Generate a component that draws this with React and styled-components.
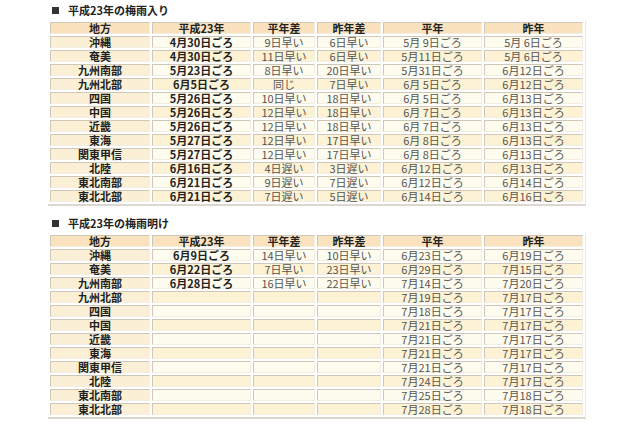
import React from 'react';
import styled, { createGlobalStyle } from 'styled-components';

const GlobalStyle = createGlobalStyle`
  html, body {
    margin: 0;
    padding: 0;
    background: #ffffff;
  }
  body {
    font-family: "Noto Sans CJK JP", "Noto Sans", sans-serif;
    color: #333;
  }
`;

const Page = styled.div`
  width: 640px;
  height: 426px;
  padding: 3px 0 0 48px;
  box-sizing: border-box;
  overflow: hidden;
`;

const Section = styled.section`
  margin-bottom: ${({ gap }) => gap || 0}px;
`;

const Title = styled.h2`
  display: flex;
  align-items: center;
  gap: 9px;
  margin: 0 0 2px 4px;
  height: 15px;
  font-size: 11px;
  font-weight: bold;
  color: #222;
  line-height: 15px;

  &::before {
    content: '';
    width: 7px;
    height: 7px;
    background: #333;
  }
`;

const Table = styled.table`
  table-layout: fixed;
  width: 537px;
  border-collapse: separate;
  border-spacing: 2px;
  border-bottom: 2px solid #dcd8d0;
  border-right: 1px solid #ece8e0;
  font-size: 11px;
`;

const Cell = styled.td`
  height: 12px;
  padding: 0;
  line-height: 10px;
  text-align: center;
  white-space: pre;
  box-sizing: border-box;
  border: 1px solid;
  border-color: #cfc8b8 #f3eee2 #f3eee2 #cfc8b8;
  font-weight: ${({ $bold }) => ($bold ? 'bold' : 'normal')};
  color: ${({ $bold }) => ($bold ? '#222' : '#555')};
  background: ${({ $tone }) =>
    $tone === 'head' ? '#fbe2bf' : $tone === 'area' ? '#fbf0d6' : $tone === 'even' ? '#fdf3d4' : '#fefbef'};
`;

const widths = [100, 99, 62, 64, 99, 99];
const heads = ['地方', '平成23年', '平年差', '昨年差', '平年', '昨年'];

const tsuyuIri = [
  ['沖縄', '4月30日ごろ', '9日早い', '6日早い', '5月 9日ごろ', '5月 6日ごろ'],
  ['奄美', '4月30日ごろ', '11日早い', '6日早い', '5月11日ごろ', '5月 6日ごろ'],
  ['九州南部', '5月23日ごろ', '8日早い', '20日早い', '5月31日ごろ', '6月12日ごろ'],
  ['九州北部', '6月5日ごろ', '同じ', '7日早い', '6月 5日ごろ', '6月12日ごろ'],
  ['四国', '5月26日ごろ', '10日早い', '18日早い', '6月 5日ごろ', '6月13日ごろ'],
  ['中国', '5月26日ごろ', '12日早い', '18日早い', '6月 7日ごろ', '6月13日ごろ'],
  ['近畿', '5月26日ごろ', '12日早い', '18日早い', '6月 7日ごろ', '6月13日ごろ'],
  ['東海', '5月27日ごろ', '12日早い', '17日早い', '6月 8日ごろ', '6月13日ごろ'],
  ['関東甲信', '5月27日ごろ', '12日早い', '17日早い', '6月 8日ごろ', '6月13日ごろ'],
  ['北陸', '6月16日ごろ', '4日遅い', '3日遅い', '6月12日ごろ', '6月13日ごろ'],
  ['東北南部', '6月21日ごろ', '9日遅い', '7日遅い', '6月12日ごろ', '6月14日ごろ'],
  ['東北北部', '6月21日ごろ', '7日遅い', '5日遅い', '6月14日ごろ', '6月16日ごろ'],
];

const tsuyuAke = [
  ['沖縄', '6月9日ごろ', '14日早い', '10日早い', '6月23日ごろ', '6月19日ごろ'],
  ['奄美', '6月22日ごろ', '7日早い', '23日早い', '6月29日ごろ', '7月15日ごろ'],
  ['九州南部', '6月28日ごろ', '16日早い', '22日早い', '7月14日ごろ', '7月20日ごろ'],
  ['九州北部', '', '', '', '7月19日ごろ', '7月17日ごろ'],
  ['四国', '', '', '', '7月18日ごろ', '7月17日ごろ'],
  ['中国', '', '', '', '7月21日ごろ', '7月17日ごろ'],
  ['近畿', '', '', '', '7月21日ごろ', '7月17日ごろ'],
  ['東海', '', '', '', '7月21日ごろ', '7月17日ごろ'],
  ['関東甲信', '', '', '', '7月21日ごろ', '7月17日ごろ'],
  ['北陸', '', '', '', '7月24日ごろ', '7月17日ごろ'],
  ['東北南部', '', '', '', '7月25日ごろ', '7月18日ごろ'],
  ['東北北部', '', '', '', '7月28日ごろ', '7月18日ごろ'],
];

function TsuyuTable({ rows }) {
  return (
    <Table>
      <colgroup>
        {widths.map((w, i) => <col key={i} style={{ width: w }} />)}
      </colgroup>
      <thead>
        <tr>
          {heads.map((h) => <Cell as="th" key={h} $tone="head" $bold>{h}</Cell>)}
        </tr>
      </thead>
      <tbody>
        {rows.map((row, r) => (
          <tr key={row[0]}>
            {row.map((v, c) => (
              <Cell
                key={c}
                $tone={c === 0 ? 'area' : r % 2 ? 'even' : 'odd'}
                $bold={c < 2}
              >
                {v}
              </Cell>
            ))}
          </tr>
        ))}
      </tbody>
    </Table>
  );
}

export default function App() {
  return (
    <>
      <GlobalStyle />
      <Page>
        <Section gap={10}>
          <Title>平成23年の梅雨入り</Title>
          <TsuyuTable rows={tsuyuIri} />
        </Section>
        <Section>
          <Title>平成23年の梅雨明け</Title>
          <TsuyuTable rows={tsuyuAke} />
        </Section>
      </Page>
    </>
  );
}
